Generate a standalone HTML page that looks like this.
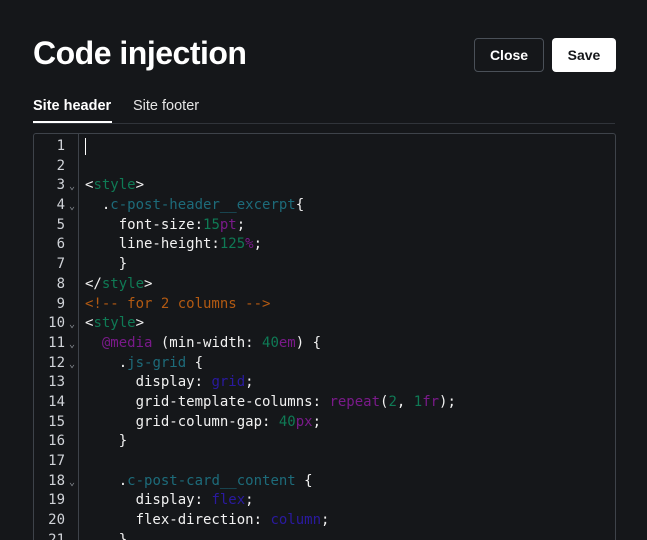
<!DOCTYPE html>
<html><head><meta charset="utf-8"><style>
*{margin:0;padding:0;box-sizing:border-box}
html{width:647px;height:540px;overflow:hidden;background:#15171a}
body{width:647px;height:540px;background:#15171a;color:#fff;font-family:"Liberation Sans",sans-serif;overflow:hidden;position:relative}
h1{position:absolute;left:33px;top:35px;font-size:32px;font-weight:bold;letter-spacing:-0.5px;color:#fff}
.btn{position:absolute;top:38px;height:34px;border-radius:4px;font-size:14px;font-weight:bold;display:flex;align-items:center;justify-content:center}
.close{left:474px;width:70px;border:1px solid #4a5058;color:#fff}
.save{left:552px;width:64px;background:#fff;color:#15171a}
.tab{position:absolute;top:98px;font-size:14.5px}
.t1{left:33px;font-weight:bold}
.t2{left:133px;color:#e6e6e6}
.ul{position:absolute;left:33px;top:121px;width:79px;height:2px;background:#fff}
.div{position:absolute;left:33px;top:123px;width:582px;height:1px;background:#30343a}
.ed{position:absolute;left:33px;top:133px;width:583px;height:420px;border:1px solid #3e434a;border-radius:3px;background:#15171a}
.gut{position:absolute;left:0;top:0;width:45px;height:100%;border-right:1px solid #3e434a}
.lines{position:absolute;left:0;top:3px;font-family:"DejaVu Sans Mono","Liberation Mono",monospace;font-size:14px;line-height:19.7px}
.l{white-space:pre;height:19.7px;position:relative}
.n{display:inline-block;width:31px;text-align:right;color:#d0d3d8}
.f{display:inline-block;width:14px;color:#8a8f96;font-size:10px;text-align:center}
.c{position:absolute;left:51px;top:0;color:#f2f2f2}
.g{color:#0f7a55}.b{color:#1d6b7a}.p{color:#7a1a8a}.o{color:#b35a12}.k{color:#2a1aa0}
.cur{display:inline-block;width:1px;height:17px;background:#fff;vertical-align:middle}
</style></head><body>
<h1>Code injection</h1>
<div class="btn close">Close</div>
<div class="btn save">Save</div>
<div class="tab t1">Site header</div>
<div class="tab t2">Site footer</div>
<div class="div"></div><div class="ul"></div>
<div class="ed"><div class="gut"></div>
<div class="lines">
<div class="l"><span class="n">1</span><span class="c"><span class="cur"></span></span></div>
<div class="l"><span class="n">2</span></div>
<div class="l"><span class="n">3</span><span class="f">⌄</span><span class="c">&lt;<span class="g">style</span>&gt;</span></div>
<div class="l"><span class="n">4</span><span class="f">⌄</span><span class="c">  .<span class="b">c-post-header__excerpt</span>{</span></div>
<div class="l"><span class="n">5</span><span class="c">    font-size:<span class="g">15</span><span class="p">pt</span>;</span></div>
<div class="l"><span class="n">6</span><span class="c">    line-height:<span class="g">125</span><span class="p">%</span>;</span></div>
<div class="l"><span class="n">7</span><span class="c">    }</span></div>
<div class="l"><span class="n">8</span><span class="c">&lt;/<span class="g">style</span>&gt;</span></div>
<div class="l"><span class="n">9</span><span class="c"><span class="o">&lt;!-- for 2 columns --&gt;</span></span></div>
<div class="l"><span class="n">10</span><span class="f">⌄</span><span class="c">&lt;<span class="g">style</span>&gt;</span></div>
<div class="l"><span class="n">11</span><span class="f">⌄</span><span class="c">  <span class="p">@media</span> (min-width: <span class="g">40</span><span class="p">em</span>) {</span></div>
<div class="l"><span class="n">12</span><span class="f">⌄</span><span class="c">    .<span class="b">js-grid</span> {</span></div>
<div class="l"><span class="n">13</span><span class="c">      display: <span class="k">grid</span>;</span></div>
<div class="l"><span class="n">14</span><span class="c">      grid-template-columns: <span class="p">repeat</span>(<span class="g">2</span>, <span class="g">1</span><span class="p">fr</span>);</span></div>
<div class="l"><span class="n">15</span><span class="c">      grid-column-gap: <span class="g">40</span><span class="p">px</span>;</span></div>
<div class="l"><span class="n">16</span><span class="c">    }</span></div>
<div class="l"><span class="n">17</span></div>
<div class="l"><span class="n">18</span><span class="f">⌄</span><span class="c">    .<span class="b">c-post-card__content</span> {</span></div>
<div class="l"><span class="n">19</span><span class="c">      display: <span class="k">flex</span>;</span></div>
<div class="l"><span class="n">20</span><span class="c">      flex-direction: <span class="k">column</span>;</span></div>
<div class="l"><span class="n">21</span><span class="c">    }</span></div>
</div></div>
</body></html>
